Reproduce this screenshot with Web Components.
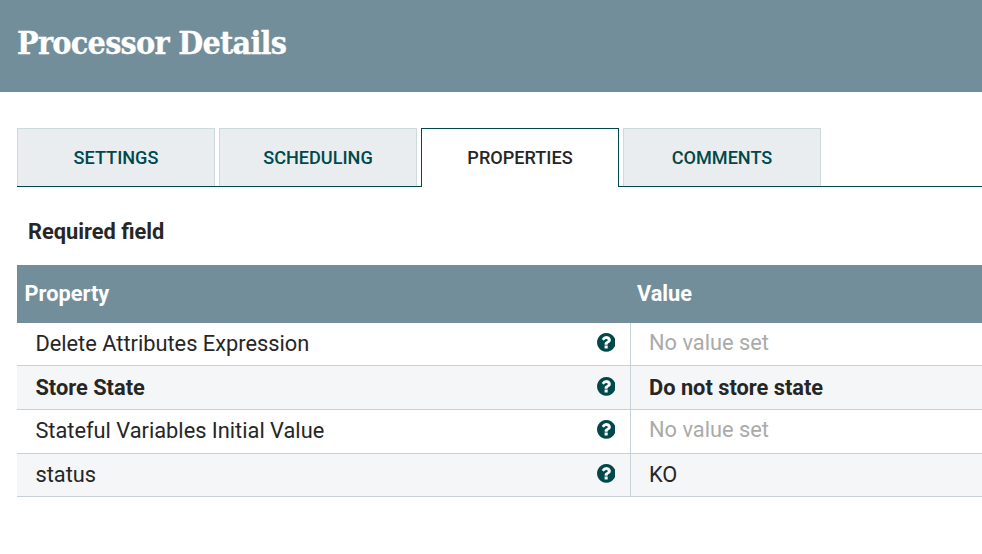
<!DOCTYPE html>
<html lang="en">
<head>
<meta charset="utf-8">
<title>Processor Details</title>
<style>
  html, body { margin: 0; background: #fff; }
  body { width: 982px; height: 554px; overflow: hidden; font-family: Roboto, "Liberation Sans", sans-serif; color: #262626; }
</style>
</head>
<body>
<processor-dialog heading="Processor Details">
  <tab-strip slot="tabs">
    <tab-item>SETTINGS</tab-item>
    <tab-item>SCHEDULING</tab-item>
    <tab-item active>PROPERTIES</tab-item>
    <tab-item>COMMENTS</tab-item>
  </tab-strip>
  <property-table>
    <property-row name="Delete Attributes Expression"></property-row>
    <property-row name="Store State" value="Do not store state" required></property-row>
    <property-row name="Stateful Variables Initial Value"></property-row>
    <property-row name="status" value="KO"></property-row>
  </property-table>
</processor-dialog>
<script>
class ProcessorDialog extends HTMLElement {
  constructor() {
    super();
    this.attachShadow({ mode: 'open' }).innerHTML = `
      <style>
        :host { display: block; }
        header { box-sizing: border-box; height: 92px; padding: 23px 0 0 17px; background: #728e9b; color: #fff; }
        h1 { margin: 0; font: bold 32px/40px "Roboto Slab", "DejaVu Serif Condensed", "DejaVu Serif", serif; font-stretch: condensed; letter-spacing: -0.75px; -webkit-text-stroke: 0.3px #fff; white-space: nowrap; }
        .tabs { padding: 36px 0 0 17px; }
        .required { padding: 30px 0 0 28px; height: 48px; font: 700 21.8px/30px Roboto, sans-serif; }
        main { padding-left: 17px; }
      </style>
      <header><h1></h1></header>
      <div class="tabs"><slot name="tabs"></slot></div>
      <div class="required">Required field</div>
      <main><slot></slot></main>`;
  }
  connectedCallback() {
    this.shadowRoot.querySelector('h1').textContent = this.getAttribute('heading');
  }
}
class TabStrip extends HTMLElement {
  constructor() {
    super();
    this.attachShadow({ mode: 'open' }).innerHTML = `
      <style>
        :host { display: flex; gap: 4px; height: 59px; background: linear-gradient(#004849, #004849) 0 100% / 100% 1px no-repeat; }
      </style><slot></slot>`;
  }
}
class TabItem extends HTMLElement {
  constructor() {
    super();
    this.attachShadow({ mode: 'open' }).innerHTML = `
      <style>
        :host { display: block; box-sizing: border-box; width: 198px; height: 58px; border: 1px solid #ccdadb; border-bottom: 0;
          background: #e9edf0; color: #004849; font-weight: 500; font-size: 18.1px; line-height: 58px; text-align: center; }
        :host([active]) { height: 59px; border-color: #004849; background: #fff; color: #262626; }
      </style><slot></slot>`;
  }
}
class PropertyTable extends HTMLElement {
  constructor() {
    super();
    this.attachShadow({ mode: 'open' }).innerHTML = `
      <style>
        :host { display: grid; grid-template-rows: 58px 43px 44px 44px 43px; }
        .head { display: grid; grid-template-columns: 612.5px 1fr; background: #728e9b; color: #fff; font: 700 21.75px/58px Roboto, sans-serif; padding-left: 7.5px; }
      </style>
      <div class="head"><div>Property</div><div>Value</div></div>
      <slot></slot>`;
  }
}
class PropertyRow extends HTMLElement {
  constructor() {
    super();
    this.attachShadow({ mode: 'open' }).innerHTML = `
      <style>
        :host { display: grid; grid-template-columns: 613px 1fr; box-sizing: border-box; border-bottom: 1px solid #c7d2d7; font-size: 21.8px; line-height: 42px; white-space: nowrap; }
        :host(:nth-child(even)) { background: #f4f6f7; }
        :host([required]) { font-weight: 700; line-height: 44px; }
        .name { display: flex; justify-content: space-between; padding: 0 14.7px 0 18.4px; }
        .value { border-left: 1px solid #c7d2d7; padding-left: 18px; }
        .unset { color: #aaa; line-height: 40px; }
        svg { width: 18.7px; height: 18.7px; margin-top: 10px; }
        :host([required]) svg { margin-top: 11px; }
      </style>
      <div class="name"><span class="n"></span>
        <svg viewBox="0 0 1536 1536"><path fill="#004849" d="M880 1248v-192q0-14-9-23t-23-9H656q-14 0-23 9t-9 23v192q0 14 9 23t23 9h192q14 0 23-9t9-23zm256-672q0-88-55.5-163T942 297 772 256q-243 0-371 213-15 24 8 42l132 100q7 6 19 6 16 0 25-12 53-68 86-92 34-24 86-24 48 0 85.500 26t37.500 59q0 38-20 61t-68 45q-63 28-115.500 86.500T624 892v36q0 14 9 23t23 9h192q14 0 23-9t9-23q0-19 21.500-49.500T956 829q32-18 49-28.500t46-35 44.500-48 28-60.500 12.500-81zm400 192q0 209-103 385.500T1153.500 1433 768 1536t-385.500-103T103 1153.500 0 768t103-385.500T382.500 103 768 0t385.500 103T1433 382.500 1536 768z"/></svg>
      </div>
      <div class="value"></div>`;
  }
  connectedCallback() {
    const v = this.shadowRoot.querySelector('.value');
    this.shadowRoot.querySelector('.n').textContent = this.getAttribute('name');
    v.textContent = this.getAttribute('value') || 'No value set';
    v.classList.toggle('unset', !this.hasAttribute('value'));
  }
}
customElements.define('processor-dialog', ProcessorDialog);
customElements.define('tab-strip', TabStrip);
customElements.define('tab-item', TabItem);
customElements.define('property-table', PropertyTable);
customElements.define('property-row', PropertyRow);
</script>
</body>
</html>
